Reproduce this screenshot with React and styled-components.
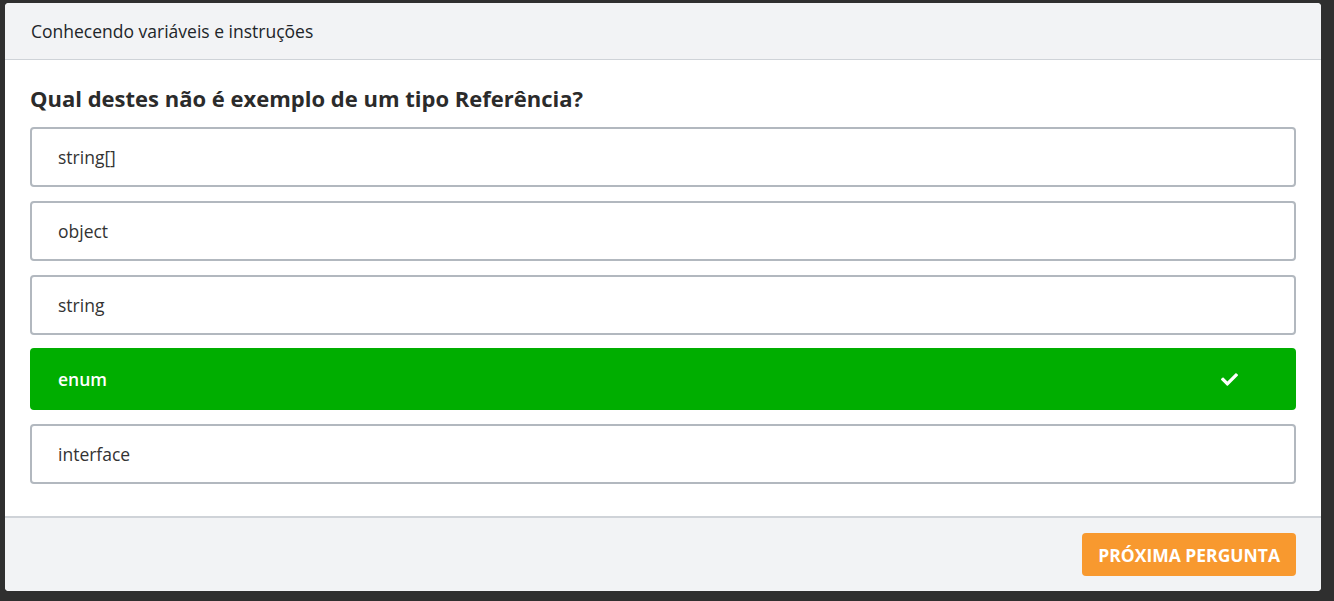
import React from "react";
import styled, { createGlobalStyle } from "styled-components";
import { FaCheck } from "react-icons/fa";

const GlobalStyle = createGlobalStyle`
  html, body {
    margin: 0;
    padding: 0;
    background: #2f2f2f;
    font-family: "Open Sans", "Liberation Sans", sans-serif;
  }
  * { box-sizing: border-box; }
`;

// Page wrapper with the dark backdrop
const Backdrop = styled.div`
  padding: 3px 13px 10px 5px;
  min-height: 601px;
`;

const Modal = styled.div`
  width: 1316px;
  height: 588px;
  background: #fff;
  border-radius: 4px;
  overflow: hidden;
  display: flex;
  flex-direction: column;
`;

const Header = styled.header`
  height: 57px;
  background: #f2f3f5;
  border-bottom: 1px solid #cfd3d8;
  display: flex;
  align-items: center;
  padding: 0 26px;
  font-size: 17.5px;
  color: #212529;
`;

const Body = styled.main`
  flex: 1;
  padding: 23px 25px 0;
  display: flex;
  flex-direction: column;
`;

const Question = styled.h2`
  margin: 0 0 14px;
  font-size: 22px;
  line-height: 30px;
  font-weight: 700;
  color: #2b2b2b;
`;

const Options = styled.div`
  display: flex;
  flex-direction: column;
  gap: 14px;
`;

const Option = styled.button`
  height: ${({ $correct }) => ($correct ? "62px" : "60px")};
  margin-top: ${({ $correct }) => ($correct ? "-1px" : "0")};
  border: 2px solid ${({ $correct }) => ($correct ? "#00ae00" : "#b2b8bf")};
  background: ${({ $correct }) => ($correct ? "#00ae00" : "#fff")};
  color: ${({ $correct }) => ($correct ? "#fff" : "#333")};
  border-radius: 4px;
  display: flex;
  align-items: center;
  justify-content: space-between;
  padding: 0 56px 0 26px;
  font-family: inherit;
  font-size: 17.5px;
  font-weight: ${({ $correct }) => ($correct ? 600 : 400)};
  text-align: left;
  cursor: pointer;
`;

const Footer = styled.footer`
  height: 75px;
  background: #f2f3f5;
  border-top: 2px solid #cfd3d8;
  display: flex;
  justify-content: flex-end;
  align-items: flex-start;
  padding: 15px 25px 0;
`;

const NextButton = styled.button`
  height: 43px;
  padding: 0 16px;
  border: none;
  border-radius: 4px;
  background: #f8992f;
  color: #fff;
  font-family: inherit;
  font-size: 17.5px;
  font-weight: 700;
  text-transform: uppercase;
  cursor: pointer;
`;

const answers = ["string[]", "object", "string", "enum", "interface"];
const correct = "enum";

export default function App() {
  return (
    <>
      <GlobalStyle />
      <Backdrop>
        <Modal>
          <Header>Conhecendo variáveis e instruções</Header>
          <Body>
            <Question>Qual destes não é exemplo de um tipo Referência?</Question>
            <Options>
              {answers.map((a) => (
                <Option key={a} $correct={a === correct}>
                  <span>{a}</span>
                  {a === correct && <FaCheck size={17} />}
                </Option>
              ))}
            </Options>
          </Body>
          <Footer>
            <NextButton>Próxima pergunta</NextButton>
          </Footer>
        </Modal>
      </Backdrop>
    </>
  );
}
